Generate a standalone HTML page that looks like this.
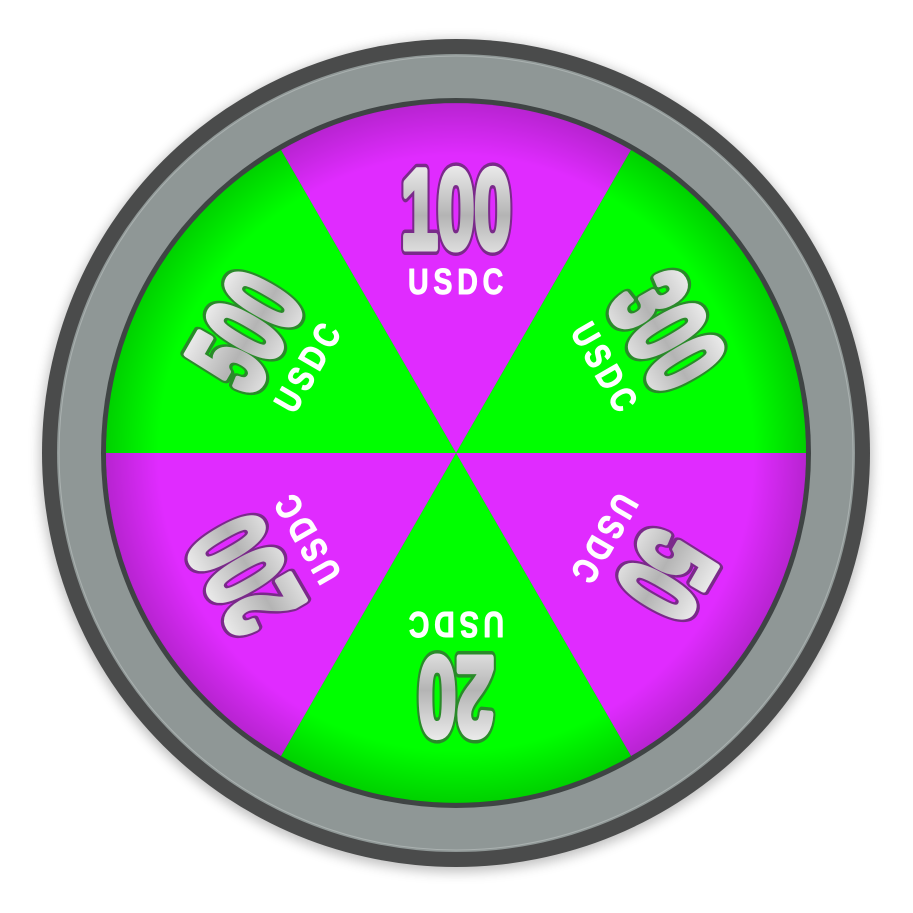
<!DOCTYPE html>
<html><head><meta charset="utf-8"><style>
html,body{margin:0;padding:0;background:#fff;width:913px;height:913px;overflow:hidden}
svg{display:block}
</style></head><body>
<svg width="913" height="913" viewBox="0 0 913 913" xmlns="http://www.w3.org/2000/svg">
<defs>
<radialGradient id="shade" cx="456" cy="453" r="350" gradientUnits="userSpaceOnUse">
<stop offset="0.85" stop-color="#000" stop-opacity="0"/>
<stop offset="1" stop-color="#000" stop-opacity="0.18"/>
</radialGradient>
<linearGradient id="metal" x1="0" y1="0" x2="0" y2="1">
<stop offset="0" stop-color="#ffffff"/>
<stop offset="0.55" stop-color="#b4b4b4"/>
<stop offset="1" stop-color="#f4f4f4"/>
</linearGradient>
<filter id="sh" x="-10%" y="-10%" width="120%" height="120%"><feGaussianBlur stdDeviation="6"/></filter>
</defs>
<circle cx="456" cy="456" r="416" fill="#000" opacity="0.25" filter="url(#sh)"/>
<circle cx="456" cy="453" r="414" fill="#4a4b4b"/>
<circle cx="456" cy="453" r="399" fill="#8f9796"/>
<circle cx="456" cy="453" r="397" fill="none" stroke="#aab1b0" stroke-width="1"/>
<circle cx="456" cy="453" r="355" fill="#3f4444"/>
<g>
<path d="M456 453 L281 150 A350 350 0 0 1 631 150 Z" fill="#e02bff"/>
<path d="M456 453 L631 150 A350 350 0 0 1 806 453 Z" fill="#00ff00"/>
<path d="M456 453 L806 453 A350 350 0 0 1 631 756 Z" fill="#e02bff"/>
<path d="M456 453 L631 756 A350 350 0 0 1 281 756 Z" fill="#00ff00"/>
<path d="M456 453 L281 756 A350 350 0 0 1 106 453 Z" fill="#e02bff"/>
<path d="M456 453 L106 453 A350 350 0 0 1 281 150 Z" fill="#00ff00"/>
<circle cx="456" cy="453" r="350" fill="url(#shade)"/>
</g>
<g font-family="'Liberation Sans',sans-serif" font-weight="bold" text-anchor="middle" stroke-linejoin="round">
<g transform="rotate(0 456 453)">
<text x="456" y="248" font-size="112" textLength="110" lengthAdjust="spacingAndGlyphs" fill="#7a2a8a" stroke="#7a2a8a" stroke-width="14">100</text>
<text x="456" y="248" font-size="112" textLength="110" lengthAdjust="spacingAndGlyphs" fill="url(#metal)" stroke="url(#metal)" stroke-width="7">100</text>
<text x="458" y="294" font-size="36" textLength="100" lengthAdjust="spacingAndGlyphs" fill="#fff" stroke="#fff" stroke-width="1" letter-spacing="6">USDC</text>
</g>
<g transform="rotate(60 456 453)">
<text x="456" y="248" font-size="112" textLength="110" lengthAdjust="spacingAndGlyphs" fill="#2a8a2a" stroke="#2a8a2a" stroke-width="14">300</text>
<text x="456" y="248" font-size="112" textLength="110" lengthAdjust="spacingAndGlyphs" fill="url(#metal)" stroke="url(#metal)" stroke-width="7">300</text>
<text x="458" y="294" font-size="36" textLength="100" lengthAdjust="spacingAndGlyphs" fill="#fff" stroke="#fff" stroke-width="1" letter-spacing="6">USDC</text>
</g>
<g transform="rotate(120 456 453)">
<text x="456" y="248" font-size="112" textLength="76" lengthAdjust="spacingAndGlyphs" fill="#7a2a8a" stroke="#7a2a8a" stroke-width="14">50</text>
<text x="456" y="248" font-size="112" textLength="76" lengthAdjust="spacingAndGlyphs" fill="url(#metal)" stroke="url(#metal)" stroke-width="7">50</text>
<text x="458" y="294" font-size="36" textLength="100" lengthAdjust="spacingAndGlyphs" fill="#fff" stroke="#fff" stroke-width="1" letter-spacing="6">USDC</text>
</g>
<g transform="rotate(180 456 453)">
<text x="456" y="248" font-size="112" textLength="76" lengthAdjust="spacingAndGlyphs" fill="#2a8a2a" stroke="#2a8a2a" stroke-width="14">20</text>
<text x="456" y="248" font-size="112" textLength="76" lengthAdjust="spacingAndGlyphs" fill="url(#metal)" stroke="url(#metal)" stroke-width="7">20</text>
<text x="458" y="294" font-size="36" textLength="100" lengthAdjust="spacingAndGlyphs" fill="#fff" stroke="#fff" stroke-width="1" letter-spacing="6">USDC</text>
</g>
<g transform="rotate(240 456 453)">
<text x="456" y="248" font-size="112" textLength="110" lengthAdjust="spacingAndGlyphs" fill="#7a2a8a" stroke="#7a2a8a" stroke-width="14">200</text>
<text x="456" y="248" font-size="112" textLength="110" lengthAdjust="spacingAndGlyphs" fill="url(#metal)" stroke="url(#metal)" stroke-width="7">200</text>
<text x="458" y="294" font-size="36" textLength="100" lengthAdjust="spacingAndGlyphs" fill="#fff" stroke="#fff" stroke-width="1" letter-spacing="6">USDC</text>
</g>
<g transform="rotate(300 456 453)">
<text x="456" y="248" font-size="112" textLength="110" lengthAdjust="spacingAndGlyphs" fill="#2a8a2a" stroke="#2a8a2a" stroke-width="14">500</text>
<text x="456" y="248" font-size="112" textLength="110" lengthAdjust="spacingAndGlyphs" fill="url(#metal)" stroke="url(#metal)" stroke-width="7">500</text>
<text x="458" y="294" font-size="36" textLength="100" lengthAdjust="spacingAndGlyphs" fill="#fff" stroke="#fff" stroke-width="1" letter-spacing="6">USDC</text>
</g>
</g>
</svg>
</body></html>
